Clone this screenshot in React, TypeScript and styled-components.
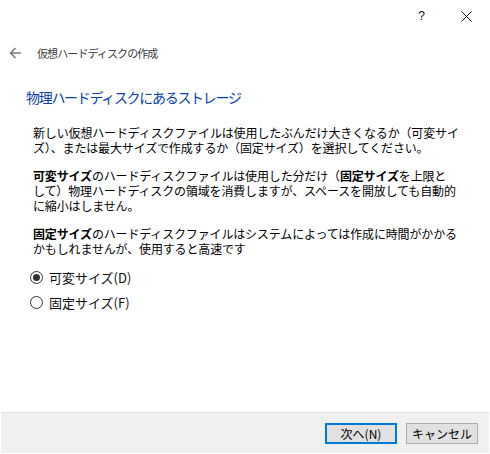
import React, { useState } from "react";
import styled, { createGlobalStyle } from "styled-components";

const GlobalStyle = createGlobalStyle`
  html, body {
    margin: 0;
    padding: 0;
    background: #fff;
  }
  body {
    font-family: "Noto Sans CJK JP", "Noto Sans", sans-serif;
    color: #000;
  }
`;

const Window = styled.div`
  width: 490px;
  height: 454px;
  display: flex;
  flex-direction: column;
  background: #fff;
  box-sizing: border-box;
  padding: 0 1px 1px;
  overflow: hidden;
`;

const TitleBar = styled.div`
  height: 32px;
  display: flex;
  justify-content: flex-end;
  align-items: stretch;
`;

const CaptionButton = styled.div`
  width: 45px;
  display: flex;
  align-items: center;
  justify-content: center;
  font-family: "Liberation Sans", sans-serif;
  font-size: 12px;
  color: #111;
`;

const NavRow = styled.div`
  height: 20px;
  margin-top: 11px;
  display: flex;
  align-items: center;
  padding-left: 8px;
`;

const BackButton = styled.div`
  width: 13px;
  height: 20px;
  display: flex;
  align-items: center;
  margin-right: 15px;
`;

const NavTitle = styled.span`
  font-size: 11px;
  letter-spacing: -0.9px;
  color: #3a3a3a;
  line-height: 20px;
`;

const Heading = styled.h1`
  margin: 24px 0 0 25px;
  font-size: 14px;
  line-height: 20px;
  letter-spacing: -1.3px;
  font-weight: 400;
  color: #0a3eab;
`;

const Body = styled.div`
  margin: 18px 0 0 32px;
  font-size: 12px;
  line-height: 15px;
`;

const Paragraph = styled.div`
  margin: 0 0 13px;
  white-space: nowrap;
  letter-spacing: -0.15px;

  &:last-child {
    margin-bottom: 0;
  }
`;

const Line = styled.div`
  display: flex;
  height: 15px;
  overflow: hidden;
`;

const Run = styled.span<{ $bold?: boolean }>`
  display: block;
  height: 15px;
  line-height: 15px;
  overflow: hidden;
  font-weight: ${(p) => (p.$bold ? 700 : 400)};
`;

const RadioGroup = styled.div`
  margin: 11px 0 0 29px;
  display: flex;
  flex-direction: column;
  gap: 5px;
`;

const RadioRow = styled.label`
  height: 20px;
  display: flex;
  align-items: center;
  font-size: 13px;
  color: #111;
  cursor: default;
`;

const RadioCircle = styled.span<{ $checked: boolean }>`
  width: 13px;
  height: 13px;
  box-sizing: border-box;
  border-radius: 50%;
  border: 1px solid #333;
  background: #fff;
  margin-right: 6px;
  display: flex;
  align-items: center;
  justify-content: center;

  &::after {
    content: "";
    width: 7px;
    height: 7px;
    border-radius: 50%;
    background: #333;
    display: ${(p) => (p.$checked ? "block" : "none")};
  }
`;

const Spacer = styled.div`
  flex: 1;
`;

const Footer = styled.div`
  height: 40px;
  border-top: 1px solid #dfdfdf;
  background: #f0f0f0;
  display: flex;
  align-items: center;
  justify-content: flex-end;
  gap: 9px;
  padding-right: 11px;
`;

const Button = styled.button<{ $default?: boolean }>`
  width: 72px;
  height: 21px;
  box-sizing: border-box;
  padding: 0;
  background: #e1e1e1;
  border: ${(p) => (p.$default ? "2px solid #0078d7" : "1px solid #adadad")};
  font-family: "Noto Sans CJK JP", "Noto Sans", sans-serif;
  font-size: 12px;
  line-height: 15px;
  color: #000;
`;

const BackArrow = () => (
  <svg width="13" height="12" viewBox="0 0 13 12" fill="none">
    <path d="M1.5 6 H12 M6.5 1 L1.5 6 L6.5 11" stroke="#7a7a7a" strokeWidth="1.6" />
  </svg>
);

const CloseIcon = () => (
  <svg width="11" height="11" viewBox="0 0 11 11" fill="none">
    <path d="M0.5 0.5 L10.5 10.5 M10.5 0.5 L0.5 10.5" stroke="#111" strokeWidth="1" />
  </svg>
);

type Segment = { text: string; bold?: boolean };

const paragraphs: Segment[][][] = [
  [
    [{ text: "新しい仮想ハードディスクファイルは使用したぶんだけ大きくなるか（可変サイ" }],
    [{ text: "ズ）、または最大サイズで作成するか（固定サイズ）を選択してください。" }],
  ],
  [
    [
      { text: "可変サイズ", bold: true },
      { text: "のハードディスクファイルは使用した分だけ（" },
      { text: "固定サイズ", bold: true },
      { text: "を上限と" },
    ],
    [{ text: "して）物理ハードディスクの領域を消費しますが、スペースを開放しても自動的" }],
    [{ text: "に縮小はしません。" }],
  ],
  [
    [
      { text: "固定サイズ", bold: true },
      { text: "のハードディスクファイルはシステムによっては作成に時間がかかる" },
    ],
    [{ text: "かもしれませんが、使用すると高速です" }],
  ],
];

const App = () => {
  const [size, setSize] = useState<"dynamic" | "fixed">("dynamic");

  return (
    <Window>
      <GlobalStyle />
      <TitleBar>
        <CaptionButton>?</CaptionButton>
        <CaptionButton>
          <CloseIcon />
        </CaptionButton>
      </TitleBar>
      <NavRow>
        <BackButton>
          <BackArrow />
        </BackButton>
        <NavTitle>仮想ハードディスクの作成</NavTitle>
      </NavRow>
      <Heading>物理ハードディスクにあるストレージ</Heading>
      <Body>
        {paragraphs.map((lines, i) => (
          <Paragraph key={i}>
            {lines.map((segments, j) => (
              <Line key={j}>
                {segments.map((s, k) => (
                  <Run key={k} $bold={s.bold}>
                    {s.text}
                  </Run>
                ))}
              </Line>
            ))}
          </Paragraph>
        ))}
      </Body>
      <RadioGroup>
        <RadioRow onClick={() => setSize("dynamic")}>
          <RadioCircle $checked={size === "dynamic"} />
          可変サイズ(D)
        </RadioRow>
        <RadioRow onClick={() => setSize("fixed")}>
          <RadioCircle $checked={size === "fixed"} />
          固定サイズ(F)
        </RadioRow>
      </RadioGroup>
      <Spacer />
      <Footer>
        <Button $default>次へ(N)</Button>
        <Button>キャンセル</Button>
      </Footer>
    </Window>
  );
};

export default App;
